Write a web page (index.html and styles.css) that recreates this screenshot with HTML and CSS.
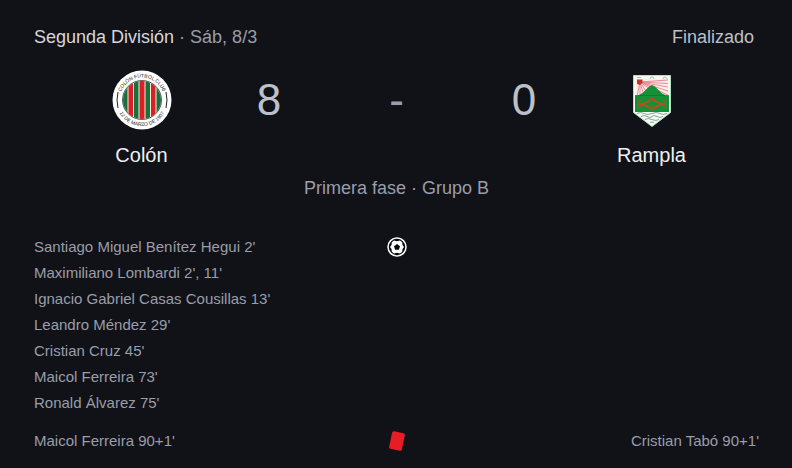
FILE: index.html
```html
<!DOCTYPE html>
<html lang="es">
<head>
    <meta charset="UTF-8">
    <meta name="viewport" content="width=device-width, initial-scale=1.0">
    <title>Colón 8 - 0 Rampla</title>
    <link rel="stylesheet" href="styles.css">
</head>
<body>
    <main class="match">
        <header class="match-header">
            <div><span class="league">Segunda División</span> · Sáb, 8/3</div>
            <div class="match-status">Finalizado</div>
        </header>

        <section class="scoreboard">
            <div class="team">
                <svg class="crest" viewBox="0 0 60 60" role="img" aria-label="Escudo de Colón">
                    <defs>
                        <clipPath id="stripes"><circle cx="30" cy="30" r="19"/></clipPath>
                        <path id="arc-top" d="M7.500 30a22.500 22.500 0 0 1 45 0"/>
                        <path id="arc-bottom" d="M4 30a26 26 0 0 0 52 0"/>
                    </defs>
                    <circle cx="30" cy="30" r="29.500" fill="#fff"/>
                    <g clip-path="url(#stripes)">
                        <path fill="#f3ecd9" d="M10 10h40v40H10z"/>
                        <path fill="#17713a" d="M10 10h5.500v40h-5.500zM22 10h4.500v40h-4.500zM33.500 10h4.500v40h-4.500zM44.500 10h6v40h-6z"/>
                        <path fill="#dc1f26" d="M16.500 10h4.500v40h-4.500zM27.500 10h5v40h-5zM39 10h4.500v40H39z"/>
                    </g>
                    <circle cx="30" cy="30" r="19.500" fill="none" stroke="#333" stroke-width=".8"/>
                    <path fill="none" stroke="#222" stroke-width="1" d="M6 22q-2 8 0 16M54 22q2 8 0 16"/>
                    <text class="crest-text"><textPath href="#arc-top" startOffset="50%">COLÓN FÚTBOL CLUB</textPath></text>
                    <text class="crest-text"><textPath href="#arc-bottom" startOffset="50%">12 DE MARZO DE 1907</textPath></text>
                </svg>
                <div class="team-name">Colón</div>
            </div>
            <div class="score">8</div>
            <div class="score dash">-</div>
            <div class="score">0</div>
            <div class="team">
                <svg class="crest" viewBox="0 0 60 60" role="img" aria-label="Escudo de Rampla">
                    <path fill="#f4faf5" stroke="#b5dfc1" d="M11.500 5.500h37v37L30 56.500l-18.500-14z"/>
                    <path fill="#fbeee9" d="M14 9h32v17H14z"/>
                    <path stroke="#e5808a" stroke-width=".9" d="M18 12l28-2M18 12l28 1.500M18 12l28 5M18 12l28 9M18 12l28 13M18 12l20 14M18 12l9 14M18 12l4 14M18 12v14M18 12l-3 14"/>
                    <path fill="#c9332c" d="M15 9.500h5.500v3l-2.500 2.500-3-1z"/>
                    <path fill="#129136" d="M13 25.500h3q5-2 8.500-6.500 2.500-3 5.500-4 3 1 5.500 4 3.500 4.500 8.500 6.500h3v16.500H13z"/>
                    <path stroke="#0c6e28" stroke-width=".6" d="M13 25.500h34"/>
                    <path fill="none" stroke="#cf431d" stroke-width="1.300" d="M16 34q7 .5 14-6 7 6.500 14 6-7 .5-14 6-7-5.500-14-6z"/>
                    <path fill="none" stroke="#b3561d" stroke-width=".8" d="M21 34l9-3.500 9 3.500-9 3.500zM15 29l4 2-3 2 3 3-4 2M45 29l-4 2 3 2-3 3 4 2"/>
                    <path fill="none" stroke="#5b8066" stroke-width=".7" d="M15 43.500q3.500-2 7 0t8 0 8 0 7 0M19 46.500q3-2 6 0t5 0 5 0 6 0M23 49.500q3-2 7 0t7 0M28 52.500q2-1 4 0"/>
                    <path fill="none" stroke="#94a99a" stroke-width=".7" d="M15 7.500h4M28 9a2 2 0 0 1 4 0M41 9a2 2 0 0 1 4 0"/>
                </svg>
                <div class="team-name">Rampla</div>
            </div>
        </section>

        <div class="stage">Primera fase · Grupo B</div>

        <section class="events">
            <ul class="players">
                <li>Santiago Miguel Benítez Hegui 2'</li>
                <li>Maximiliano Lombardi 2', 11'</li>
                <li>Ignacio Gabriel Casas Cousillas 13'</li>
                <li>Leandro Méndez 29'</li>
                <li>Cristian Cruz 45'</li>
                <li>Maicol Ferreira 73'</li>
                <li>Ronald Álvarez 75'</li>
            </ul>
            <div class="event-icon">
                <svg viewBox="0 0 20 20" role="img" aria-label="Goles">
                    <circle cx="10" cy="10" r="9" fill="#08090c" stroke="#fff" stroke-width="1.500"/>
                    <path fill="#fff" d="M7 3.500l3 .8 3-.8 2.200 1.800.3 2.700 1.500 2-1.500 2-.3 2.700L13 16.500l-3-.8-3 .8-2.200-1.800-.3-2.700L3 10l1.500-2 .3-2.700z"/>
                    <path fill="#08090c" d="M10 7l3 2.200-1.100 3.500H8.100L7 9.200z"/>
                </svg>
            </div>
        </section>

        <section class="events">
            <ul class="players">
                <li>Maicol Ferreira 90+1'</li>
            </ul>
            <div class="event-icon">
                <svg viewBox="0 0 20 20" role="img" aria-label="Tarjetas rojas">
                    <rect x="3.500" y="1" width="13" height="18" rx="2" fill="#e81c24" transform="rotate(12 10 10)"/>
                </svg>
            </div>
            <ul class="players away">
                <li>Cristian Tabó 90+1'</li>
            </ul>
        </section>
    </main>
</body>
</html>
```

FILE: styles.css
```css
* {
    box-sizing: border-box;
}
body {
    margin: 0;
    background-color: #111217;
    color: #9a9daa;
    font-family: Arial, "Liberation Sans", sans-serif;
}
.match {
    padding: 26px 33px 14px 34px;
}
.match-header {
    display: flex;
    justify-content: space-between;
    padding-right: 5px;
    margin-bottom: 22px;
    font-size: 18px;
    line-height: 22px;
}
.league {
    color: #d6d7dc;
}
.match-status {
    color: #bcc0c9;
}
.scoreboard {
    display: grid;
    grid-template-columns: 43fr 8fr 43fr 8fr 43fr;
    text-align: center;
}
.crest {
    display: block;
    width: 60px;
    height: 60px;
    margin: 0 auto 13px;
}
.crest-text {
    font-size: 5px;
    text-anchor: middle;
    fill: #222;
}
.team-name {
    color: #eeeff2;
    font-size: 20px;
    line-height: 24px;
}
.score {
    color: #bcc0c9;
    font-size: 44px;
    line-height: 60px;
}
.dash {
    color: #9a9daa;
}
.stage {
    margin: 10px 0 35px;
    font-size: 18px;
    line-height: 22px;
    text-align: center;
}
.events {
    display: grid;
    grid-template-columns: 1fr 20px 1fr;
    margin-bottom: 12px;
    font-size: 15px;
    line-height: 26px;
}
.players {
    margin: 0;
    padding: 0;
    list-style: none;
}
.away {
    text-align: right;
}
.event-icon {
    display: flex;
    align-items: center;
    height: 26px;
}
.event-icon svg {
    width: 20px;
    height: 20px;
}
```
